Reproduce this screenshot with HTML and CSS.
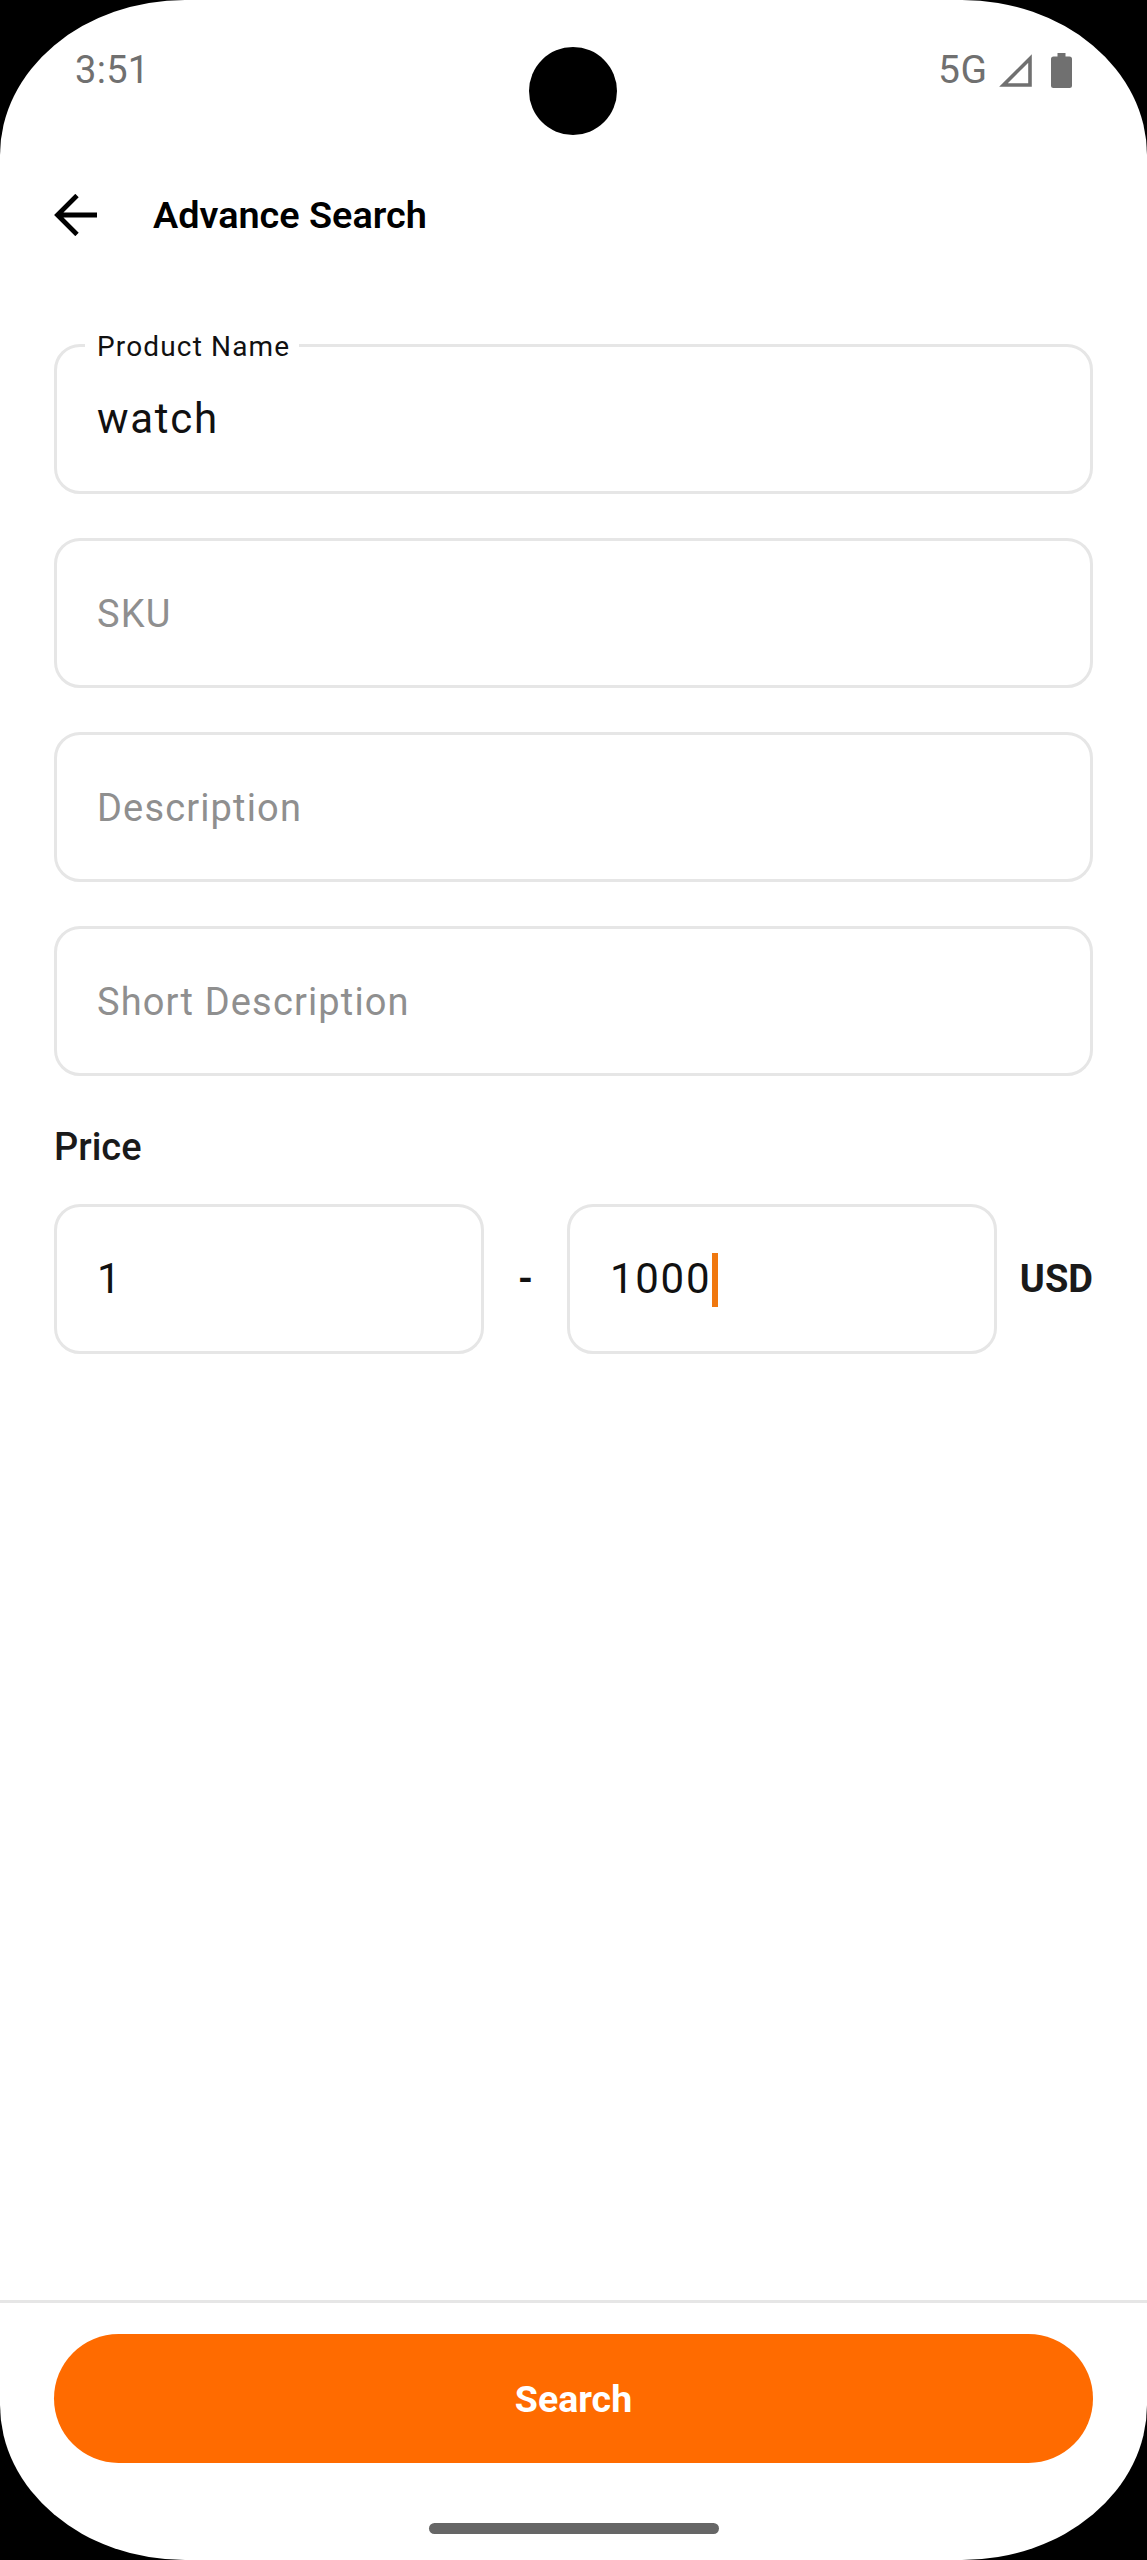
FILE: index.html
```html
<!DOCTYPE html>
<html lang="en">
<head>
  <meta charset="UTF-8" />
  <meta name="viewport" content="width=device-width, initial-scale=1.0"/>
  <title>Advance Search</title>
  <link rel="stylesheet" href="styles.css">
</head>
<body>
  <div class="phone">
    <div class="camera"></div>

    <div class="status-bar">
      <span class="time">3:51</span>
      <div class="status-icons">
        <span class="network">5G</span>
        <svg class="signal" width="33" height="34" viewBox="0 0 33 34">
          <path d="M31 5.5V32H4.5Z" fill="none" stroke="#707070" stroke-width="3.6"/>
        </svg>
        <svg class="battery" width="21" height="35" viewBox="0 0 21 35">
          <path d="M6.5 0H14.5V3.5H18.5Q21 3.5 21 6V32.5Q21 35 18.5 35H2.5Q0 35 0 32.5V6Q0 3.5 2.5 3.5H6.5Z" fill="#707070"/>
        </svg>
      </div>
    </div>

    <div class="app-bar">
      <svg class="back" width="44" height="42" viewBox="0 0 44 42">
        <path d="M43 21H3.5M23 1.5L3.5 21L23 40.5" fill="none" stroke="#000" stroke-width="4.8"/>
      </svg>
      <h1>Advance Search</h1>
    </div>

    <form class="search-form">
      <div class="field filled">
        <label>Product Name</label>
        <span class="value">watch</span>
      </div>
      <div class="field"><span class="placeholder">SKU</span></div>
      <div class="field"><span class="placeholder">Description</span></div>
      <div class="field"><span class="placeholder">Short Description</span></div>

      <div class="price-label">Price</div>
      <div class="price-row">
        <div class="field price"><span class="value">1</span></div>
        <span class="dash">-</span>
        <div class="field price"><span class="value">1000</span><span class="caret"></span></div>
        <span class="currency">USD</span>
      </div>
    </form>

    <div class="footer">
      <button type="button" class="search-btn">Search</button>
      <div class="home-bar"></div>
    </div>
  </div>
</body>
</html>
```

FILE: styles.css
```css
* {
  box-sizing: border-box;
}
body {
  margin: 0;
  background: #000;
  font-family: Roboto, "Liberation Sans", sans-serif;
}
.phone {
  position: relative;
  width: 1147px;
  height: 2560px;
  background: #fff;
  border-radius: 185px / 155px;
  overflow: hidden;
  display: flex;
  flex-direction: column;
}
.camera {
  position: absolute;
  top: 47px;
  left: 529px;
  width: 88px;
  height: 88px;
  border-radius: 50%;
  background: #000;
}
.status-bar {
  height: 140px;
  padding: 48px 75px 0 75px;
  display: flex;
  justify-content: space-between;
  align-items: flex-start;
  color: #707070;
  font-size: 38px;
  letter-spacing: 0.3px;
  line-height: 44px;
}
.status-icons {
  display: flex;
  align-items: center;
}
.network {
  font-size: 39px;
  letter-spacing: 0.8px;
  margin-right: 11px;
}
.signal {
  margin-right: 19px;
}
.app-bar {
  height: 149px;
  padding: 0 54px;
  display: flex;
  align-items: center;
}
.app-bar h1 {
  margin: 1px 0 0 55px;
  font-size: 37.8px;
  font-weight: 600;
  color: #000;
}
.search-form {
  flex: 1;
  padding: 55px 54px 0 54px;
}
.field {
  position: relative;
  height: 150px;
  margin-bottom: 44px;
  padding: 1px 40px 0 40px;
  border: 3px solid #e6e6e6;
  border-radius: 26px;
  display: flex;
  align-items: center;
  font-size: 38px;
  letter-spacing: 1.15px;
}
.field label {
  position: absolute;
  top: -18px;
  left: 28px;
  padding: 0 9px 0 12px;
  background: #fff;
  font-size: 28px;
  line-height: 36px;
  letter-spacing: 1.15px;
  color: #111;
}
.value {
  font-size: 42px;
  line-height: 48px;
  margin-top: -2px;
  color: #111;
  letter-spacing: 1.7px;
}
.placeholder {
  color: #8f8f8f;
}
.price-label {
  margin-top: 49px;
  font-size: 38px;
  font-weight: 500;
  color: #1a1a1a;
  line-height: 44px;
}
.price-row {
  margin-top: 35px;
  display: flex;
  align-items: center;
}
.field.price {
  width: 430px;
  margin-bottom: 0;
}
.caret {
  width: 6px;
  height: 54px;
  margin-left: 1px;
  background: #f0780f;
}
.dash {
  width: 83px;
  text-align: center;
  font-size: 38px;
  font-weight: 700;
  color: #111;
}
.currency {
  margin-left: auto;
  font-size: 38px;
  font-weight: 700;
  color: #1a1a1a;
}
.footer {
  height: 260px;
  border-top: 3px solid #e6e6e6;
  padding: 31px 54px 0 54px;
  display: flex;
  flex-direction: column;
  align-items: center;
}
.search-btn {
  width: 100%;
  height: 129px;
  border: none;
  border-radius: 65px;
  background: #ff6b00;
  color: #fff;
  font-family: inherit;
  font-size: 37.5px;
  font-weight: 700;
}
.home-bar {
  width: 290px;
  height: 11px;
  margin-top: 60px;
  border-radius: 6px;
  background: #666;
}
```
